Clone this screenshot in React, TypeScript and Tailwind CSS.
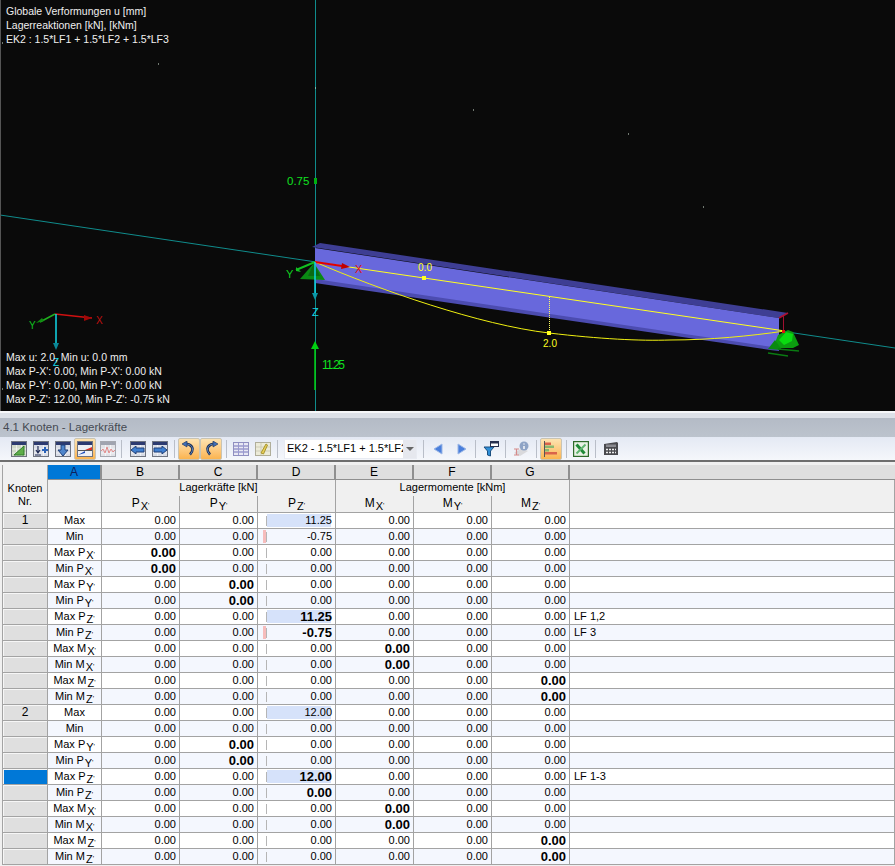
const columns = ["A", "B", "C", "D", "E", "F", "G"];

type Row = {
  node?: string;
  kind: string;
  sym?: string;
  sub?: string;
  bold?: number;
  d?: string;
  bar?: "blue" | "red";
  note?: string;
  selected?: boolean;
};

const rows: Row[] = [
  { node: "1", kind: "Max", d: "11.25", bar: "blue" },
  { kind: "Min", d: "-0.75", bar: "red" },
  { kind: "Max", sym: "P", sub: "X", bold: 0 },
  { kind: "Min", sym: "P", sub: "X", bold: 0 },
  { kind: "Max", sym: "P", sub: "Y", bold: 1 },
  { kind: "Min", sym: "P", sub: "Y", bold: 1 },
  { kind: "Max", sym: "P", sub: "Z", bold: 2, d: "11.25", bar: "blue", note: "LF 1,2" },
  { kind: "Min", sym: "P", sub: "Z", bold: 2, d: "-0.75", bar: "red", note: "LF 3" },
  { kind: "Max", sym: "M", sub: "X", bold: 3 },
  { kind: "Min", sym: "M", sub: "X", bold: 3 },
  { kind: "Max", sym: "M", sub: "Z", bold: 5 },
  { kind: "Min", sym: "M", sub: "Z", bold: 5 },
  { node: "2", kind: "Max", d: "12.00", bar: "blue" },
  { kind: "Min" },
  { kind: "Max", sym: "P", sub: "Y", bold: 1 },
  { kind: "Min", sym: "P", sub: "Y", bold: 1 },
  { kind: "Max", sym: "P", sub: "Z", bold: 2, d: "12.00", bar: "blue", note: "LF 1-3", selected: true },
  { kind: "Min", sym: "P", sub: "Z", bold: 2 },
  { kind: "Max", sym: "M", sub: "X", bold: 3 },
  { kind: "Min", sym: "M", sub: "X", bold: 3 },
  { kind: "Max", sym: "M", sub: "Z", bold: 5 },
  { kind: "Min", sym: "M", sub: "Z", bold: 5 },
];

function Sym({ sym, sub }: { sym: string; sub: string }) {
  return (
    <span>
      {sym}
      <span className="relative top-[3px] ml-px text-[11px]">{sub}</span>
      <span className="relative top-[1px] text-[7px]">'</span>
    </span>
  );
}

function TableBase({ fill = "#d8dce6", head = "#2c3a70", frame = "#6f7480" }: { fill?: string; head?: string; frame?: string }) {
  return (
    <>
      <rect x="0.5" y="0.5" width="15" height="15" fill={fill} stroke={frame} />
      <rect x="1" y="1" width="14" height="3" fill={head} />
      <path d="M1 8h14M1 12h14M5.5 4v11M10.5 4v11" stroke="#ffffff" strokeOpacity="0.6" fill="none" />
    </>
  );
}

function Icon({ children }: { children: React.ReactNode }) {
  return (
    <svg width="16" height="16" viewBox="0 0 16 16">
      {children}
    </svg>
  );
}

function Btn({ active, children, className = "" }: { active?: boolean; children: React.ReactNode; className?: string }) {
  return (
    <div
      className={`flex h-[22px] w-[22px] items-center justify-center rounded-[2px] ${
        active ? "border border-[#c9c4b4] bg-gradient-to-b from-[#fde3b0] to-[#fbb44e]" : ""
      } ${className}`}
    >
      {children}
    </div>
  );
}

function Sep({ className }: { className: string }) {
  return <div className={`h-[18px] w-px bg-[#b9bec8] ${className}`} />;
}

function Toolbar() {
  return (
    <div className="flex h-[25px] items-center border-b-2 border-[#6e6e6e] bg-gradient-to-b from-[#e4e9f4] to-[#f5f7fb] pl-[8px]">
      <Btn>
        <Icon>
          <TableBase fill="#cfd8c8" />
          <path d="M3 14L13 5v9z" fill="#5fae4a" stroke="#2f7d2a" />
        </Icon>
      </Btn>
      <Btn>
        <Icon>
          <TableBase />
          <path d="M5 5v6M3 9l2 3 2-3M2 14h6" stroke="#1f2a55" fill="none" strokeWidth="1.2" />
          <path d="M9 9h6M12 6v6" stroke="#2a62b8" strokeWidth="2" />
        </Icon>
      </Btn>
      <Btn>
        <Icon>
          <TableBase />
          <path d="M6 4h4v5h3l-5 6-5-6h3z" fill="#4f86cc" stroke="#1f3f78" />
        </Icon>
      </Btn>
      <Btn active>
        <Icon>
          <rect x="0.5" y="0.5" width="15" height="15" fill="#eef0f5" stroke="#6f7480" />
          <rect x="1" y="1" width="14" height="3" fill="#2c3a70" />
          <path d="M8 9l7-3v3z" fill="#d8342a" />
          <path d="M1 14l7-4v2l-7 2z" fill="#1f4fb8" />
          <path d="M1 9.5h14" stroke="#555" />
        </Icon>
      </Btn>
      <Btn className="ml-px">
        <Icon>
          <TableBase fill="#e2e3e8" head="#a0a4b0" frame="#a5a8b0" />
          <path d="M1 10l2-2 2 4 2-6 2 6 2-4 2 3 2-2" stroke="#e28a8a" fill="none" />
        </Icon>
      </Btn>
      <Sep className="ml-[2px] mr-[5px]" />
      <Btn>
        <Icon>
          <TableBase />
          <path d="M1 9l5-4v2h8v4H6v2z" fill="#3f7fd0" stroke="#1f3f78" />
        </Icon>
      </Btn>
      <Btn>
        <Icon>
          <TableBase />
          <path d="M15 9l-5-4v2H2v4h8v2z" fill="#3f7fd0" stroke="#1f3f78" />
        </Icon>
      </Btn>
      <Sep className="ml-[3px] mr-[3px]" />
      <Btn active>
        <Icon>
          <path d="M4 2.5L8 3.5C12.5 5.5 12.5 10 9 13.5" stroke="#1c2f55" strokeWidth="2.6" fill="none" />
          <path d="M4 2.5L8 3.5C12.5 5.5 12.5 10 9 13.5" stroke="#6f9ad6" strokeWidth="0.8" fill="none" />
          <path d="M6 0L1 3l5 3z" fill="#3f6fb8" stroke="#1c2f55" strokeWidth="0.6" />
        </Icon>
      </Btn>
      <Btn active>
        <Icon>
          <path d="M12 2.5L8 3.5C3.5 5.5 3.5 10 7 13.5" stroke="#1c2f55" strokeWidth="2.6" fill="none" />
          <path d="M12 2.5L8 3.5C3.5 5.5 3.5 10 7 13.5" stroke="#6f9ad6" strokeWidth="0.8" fill="none" />
          <path d="M10 0l5 3-5 3z" fill="#3f6fb8" stroke="#1c2f55" strokeWidth="0.6" />
        </Icon>
      </Btn>
      <Sep className="ml-[4px] mr-[3px]" />
      <Btn>
        <Icon>
          <rect x="0.5" y="1.5" width="15" height="13" fill="#e8e8f4" stroke="#8f8fc0" />
          <path d="M1 5h14M1 8h14M1 11h14" stroke="#7272b8" />
          <path d="M5.5 2v12M10.5 2v12" stroke="#9a9ad0" />
        </Icon>
      </Btn>
      <Btn>
        <Icon>
          <rect x="0.5" y="1.5" width="15" height="13" fill="#ecebd8" stroke="#b0ae9a" />
          <path d="M1 6h14M1 10h14M6 2v12" stroke="#cfcdb8" />
          <path d="M6 12l5-9 1.5 1-4 9z" fill="#e8cf56" stroke="#a89530" />
        </Icon>
      </Btn>
      <Sep className="ml-[3px] mr-[5px]" />
      <div className="ml-px flex h-[20px] w-[133px] items-center border border-[#e8ebf2] bg-white pl-[2px]">
        <div className="w-[116px] overflow-hidden whitespace-nowrap text-[11px] text-black">EK2 - 1.5*LF1 + 1.5*LF2</div>
        <div className="flex h-full flex-1 items-center justify-center bg-[#e6e8ee]">
          <div className="h-0 w-0 border-x-[4px] border-t-[4px] border-x-transparent border-t-[#666]" />
        </div>
      </div>
      <Sep className="ml-[6px] mr-[4px]" />
      <Btn>
        <Icon>
          <path d="M3 8l8-5v10z" fill="#4a7fdc" stroke="#9db8e6" />
        </Icon>
      </Btn>
      <Btn>
        <Icon>
          <path d="M13 8L5 3v10z" fill="#4a7fdc" stroke="#9db8e6" />
        </Icon>
      </Btn>
      <Sep className="ml-[3px] mr-[4px]" />
      <Btn>
        <Icon>
          <path d="M1 6h10L7.5 10v5l-3-1v-4z" fill="#2f8fd8" stroke="#1b4f80" />
          <rect x="7.5" y="0.5" width="8" height="5" fill="#fff" stroke="#26304f" />
          <rect x="8" y="1" width="7" height="1.5" fill="#26304f" />
        </Icon>
      </Btn>
      <Sep className="ml-[3px] mr-[4px]" />
      <Btn>
        <Icon>
          <path d="M1 12l8-5 6 3-8 5z" fill="#d9d9dc" />
          <path d="M1 8h5M3.5 8v6M1 14h5" stroke="#d48a8a" strokeWidth="1.2" fill="none" />
          <circle cx="11" cy="5" r="4.5" fill="#8fa4c6" />
          <path d="M11 2.5v1M11 5v3" stroke="#fff" strokeWidth="1.4" />
        </Icon>
      </Btn>
      <Sep className="ml-[4px] mr-[3px]" />
      <Btn active>
        <Icon>
          <path d="M1.5 0v16" stroke="#555" />
          <rect x="2" y="1.5" width="6" height="2.5" fill="#d9634a" />
          <rect x="2" y="4.5" width="9" height="2.5" fill="#8ab870" />
          <rect x="2" y="8" width="4" height="2.5" fill="#8ab870" />
          <rect x="2" y="11" width="12" height="2.5" fill="#d9634a" />
        </Icon>
      </Btn>
      <Sep className="ml-[4px] mr-[3px]" />
      <Btn>
        <Icon>
          <rect x="0.5" y="0.5" width="15" height="15" fill="#e8f2e4" stroke="#2e6b2a" strokeWidth="1.4" />
          <path d="M3.5 3.5l8 9" stroke="#1f8a36" strokeWidth="3" />
          <path d="M12.5 3.5l-9 9" stroke="#5fb56f" strokeWidth="2" />
        </Icon>
      </Btn>
      <Sep className="ml-[3px] mr-[4px]" />
      <Btn>
        <Icon>
          <path d="M1 3l13-2 1 1v12H1z" fill="#4a4a4e" />
          <rect x="3" y="3.5" width="10" height="2.5" fill="#8a8a90" />
          <path d="M3 8.5h2M6 8.5h2M9 8.5h2M12 8.5h1M3 11.5h2M6 11.5h2M9 11.5h2M12 11.5h1" stroke="#eee" strokeWidth="1.4" />
        </Icon>
      </Btn>
    </div>
  );
}

function Beam3D() {
  return (
    <svg className="absolute inset-0" width="895" height="411" viewBox="0 0 895 411" fontFamily="'Liberation Sans', sans-serif" fontSize="11">
      {/* axes */}
      <path d="M315.5 0V411" stroke="#108c8c" />
      <path d="M0 215L895 348" stroke="#108c8c" />
      <path d="M0.5 0V411" stroke="#555" />

      {/* stray dots */}
      <path d="M158 64h1M473 110h1M628 134h1M315 88h1M703 207h1M2 43h1M2 389h1" stroke="#d8e8d8" />

      {/* I-beam */}
      <polygon points="312,247 320,243 788,313 779,318" fill="#3e3e94" />
      <polygon points="315,248 779,318 779,350 315,281" fill="#6868dc" />
      <polygon points="315,279 779,348 779,351 770,350 315,283" fill="#4c4cb0" />
      <path d="M779 318L788 313" stroke="#b01030" strokeWidth="1.5" />
      <path d="M783.5 316V332" stroke="#a01030" />

      {/* right support */}
      <polygon points="775,343 778,335 788,330 793,332 799,345 793,348 780,348" fill="#0c9c10" />
      <polygon points="779,340 786,332 793,334 792,341 784,345" fill="#0adc10" />
      <polygon points="768,349 775,340 782,350" fill="#0a8a10" />
      <path d="M778 349L799 351M768 353L788 356" stroke="#0a7a12" strokeWidth="1.5" />

      {/* deflection */}
      <path d="M315 262L785 331" stroke="#ffff20" fill="none" />
      <path d="M315 262C380 290 480 325 549 333C600 339 640 341 670 340C710 340 750 336 785 331" stroke="#f0f010" fill="none" />
      <path d="M549.5 297V333" stroke="#ffff60" strokeDasharray="1 1" />
      <rect x="422" y="276" width="4" height="4" fill="#ffff20" />
      <rect x="547" y="331" width="4" height="4" fill="#ffff20" />
      <text x="425" y="271" textAnchor="middle" fill="#ffff20" fontSize="10">0.0</text>
      <text x="550" y="347" textAnchor="middle" fill="#ffff20" fontSize="10">2.0</text>
      <rect x="782" y="330" width="3" height="3" fill="#e01010" />

      {/* left support and local axes */}
      <polygon points="314,263 300,279 325,280" fill="#0a8a14" />
      <polygon points="314,263 308,276 320,276" fill="#0b6a12" />
      <path d="M315 262L296 270" stroke="#10c020" strokeWidth="2" />
      <polygon points="296,267 301,272 296,271" fill="#10c020" />
      <path d="M315 262L342 266" stroke="#e00000" strokeWidth="2" />
      <polygon points="342,263 350,267 341,269" fill="#c00000" />
      <path d="M315 262V296" stroke="#12d8e8" strokeWidth="1.5" />
      <polygon points="312,293 318,293 315,300" fill="#0a98a8" />
      <text x="286" y="278" fill="#10d020">Y</text>
      <text x="355" y="273" fill="#e01010">X</text>
      <text x="312" y="316" fill="#12d8e8">Z</text>

      {/* load arrows */}
      <path d="M315 390V347" stroke="#00d010" strokeWidth="1.5" />
      <polygon points="311,349 319,349 315,341" fill="#00d010" />
      <text x="322" y="369" fill="#10e020" fontSize="12" textLength="23">11.25</text>
      <rect x="314" y="178" width="3" height="6" fill="#00b010" />
      <text x="287" y="185" fill="#10e020" fontSize="11.5">0.75</text>

      {/* coordinate triad */}
      <path d="M55 314L92 318" stroke="#d01010" strokeWidth="1.5" />
      <polygon points="84,315 92,318 84,321" fill="#a00808" />
      <path d="M55 314L40 322" stroke="#20b020" strokeWidth="1.5" />
      <polygon points="36,323 42,318 44,321" fill="#108a10" />
      <path d="M56 314V343" stroke="#12d8e8" strokeWidth="1.5" />
      <polygon points="53,343 59,343 56,350" fill="#0a8898" />
      <text x="29" y="329" fill="#10c020" fontSize="10">Y</text>
      <text x="96" y="324" fill="#c01010" fontSize="10">X</text>
      <text x="53" y="366" fill="#12d8e8" fontSize="10">Z</text>
    </svg>
  );
}

function Viewport() {
  return (
    <div className="relative h-[411px] overflow-hidden bg-[#0a0a0a] text-[10.5px] leading-[14px] text-[#f0f0f0]">
      <Beam3D />
      <div className="absolute left-[6px] top-[4px]">
        <p>Globale Verformungen u [mm]</p>
        <p>Lagerreaktionen [kN], [kNm]</p>
        <p>EK2 : 1.5*LF1 + 1.5*LF2 + 1.5*LF3</p>
      </div>
      <div className="absolute left-[6px] top-[350px]">
        <p>Max u: 2.0, Min u: 0.0 mm</p>
        <p>Max P-X': 0.00, Min P-X': 0.00 kN</p>
        <p>Max P-Y': 0.00, Min P-Y': 0.00 kN</p>
        <p>Max P-Z': 12.00, Min P-Z': -0.75 kN</p>
      </div>
    </div>
  );
}

const line = "border-b border-r border-[#a3a3a3]";

function DataRow({ row, index }: { row: Row; index: number }) {
  const bg = index % 2 === 0 ? "bg-white" : "bg-[#f4f7fe]";
  return (
    <>
      <div
        className={`${line} flex items-center justify-center text-[12px] shadow-[inset_1px_1px_0_#f6f6f6] ${
          row.selected ? "bg-[#0078d7]" : "bg-[#dfdfdf]"
        }`}
      >
        {row.node}
      </div>
      <div className={`${line} ${bg} text-center`}>
        {row.kind} {row.sym && row.sub ? <Sym sym={row.sym} sub={row.sub} /> : null}
      </div>
      {[0, 1, 2, 3, 4, 5].map((col) => {
        const value = col === 2 && row.d ? row.d : "0.00";
        const isBold = row.bold === col;
        return (
          <div
            key={col}
            className={`${line} ${bg} relative pr-[3px] text-right ${isBold ? "text-[13px] font-bold" : ""}`}
          >
            {col === 2 && (
              <>
                <span className="absolute left-[8px] top-[3px] h-[10px] w-px bg-[#b5b5b5]" />
                {row.bar === "blue" && <span className="absolute left-[9px] top-[1px] h-[13px] w-[64px] bg-[#d6e2fa]" />}
                {row.bar === "red" && <span className="absolute left-[5px] top-[1px] h-[13px] w-[3px] bg-[#f6bcbc]" />}
              </>
            )}
            <span className="relative">{value}</span>
          </div>
        );
      })}
      <div className={`${line} ${bg} pl-[4px]`}>{row.note}</div>
    </>
  );
}

function DataTable() {
  return (
    <div className="ml-[2px] mt-[3px] grid grid-cols-[45px_54px_78px_78px_78px_78px_78px_78px_1fr] grid-rows-[15px_16px_17px] auto-rows-[16px] border-l border-[#a3a3a3] text-[11px] leading-[15px] text-black">
      <div className={`${line} row-span-3 bg-[#f0f0f0] pt-[17px] text-center leading-[13px]`}>
        Knoten
        <br />
        Nr.
      </div>
      {columns.map((c) => (
        <div
          key={c}
          className={`border-r-2 border-[#8f8f8f] text-[12px] leading-[14px] ${c === "A" ? "bg-[#0078d7] text-[#10205a]" : "bg-[#dfdfdf]"} border-b text-center`}
        >
          {c}
        </div>
      ))}
      <div className="border-b border-[#8f8f8f] bg-[#dfdfdf]" />

      <div className={`${line} row-span-2 bg-[#f0f0f0]`} />
      <div className="col-span-3 border-r border-[#a3a3a3] bg-[#f0f0f0] text-center">Lagerkräfte [kN]</div>
      <div className="col-span-3 border-r border-[#a3a3a3] bg-[#f0f0f0] text-center">Lagermomente [kNm]</div>
      <div className={`${line} row-span-2 bg-[#f0f0f0]`} />

      {[
        ["P", "X"],
        ["P", "Y"],
        ["P", "Z"],
        ["M", "X"],
        ["M", "Y"],
        ["M", "Z"],
      ].map(([s, sub]) => (
        <div key={s + sub} className={`${line} bg-[#f0f0f0] text-center text-[12px]`}>
          <Sym sym={s} sub={sub} />
        </div>
      ))}

      {rows.map((row, i) => (
        <DataRow key={i} row={row} index={i} />
      ))}
    </div>
  );
}

export default function App() {
  return (
    <div className="h-[866px] w-[895px] overflow-hidden bg-[#f0f0f0] font-['Liberation_Sans',sans-serif]">
      <Viewport />
      <div className="h-[2px] bg-[#f6f7f9]" />
      <div className="h-[5px] bg-[#dde1e8]" />
      <div className="flex h-[19px] items-center bg-gradient-to-b from-[#b4bbc6] to-[#bcc3cd] pl-[3px] text-[11.5px] text-[#454a52]">
        4.1 Knoten - Lagerkräfte
      </div>
      <Toolbar />
      <DataTable />
    </div>
  );
}
